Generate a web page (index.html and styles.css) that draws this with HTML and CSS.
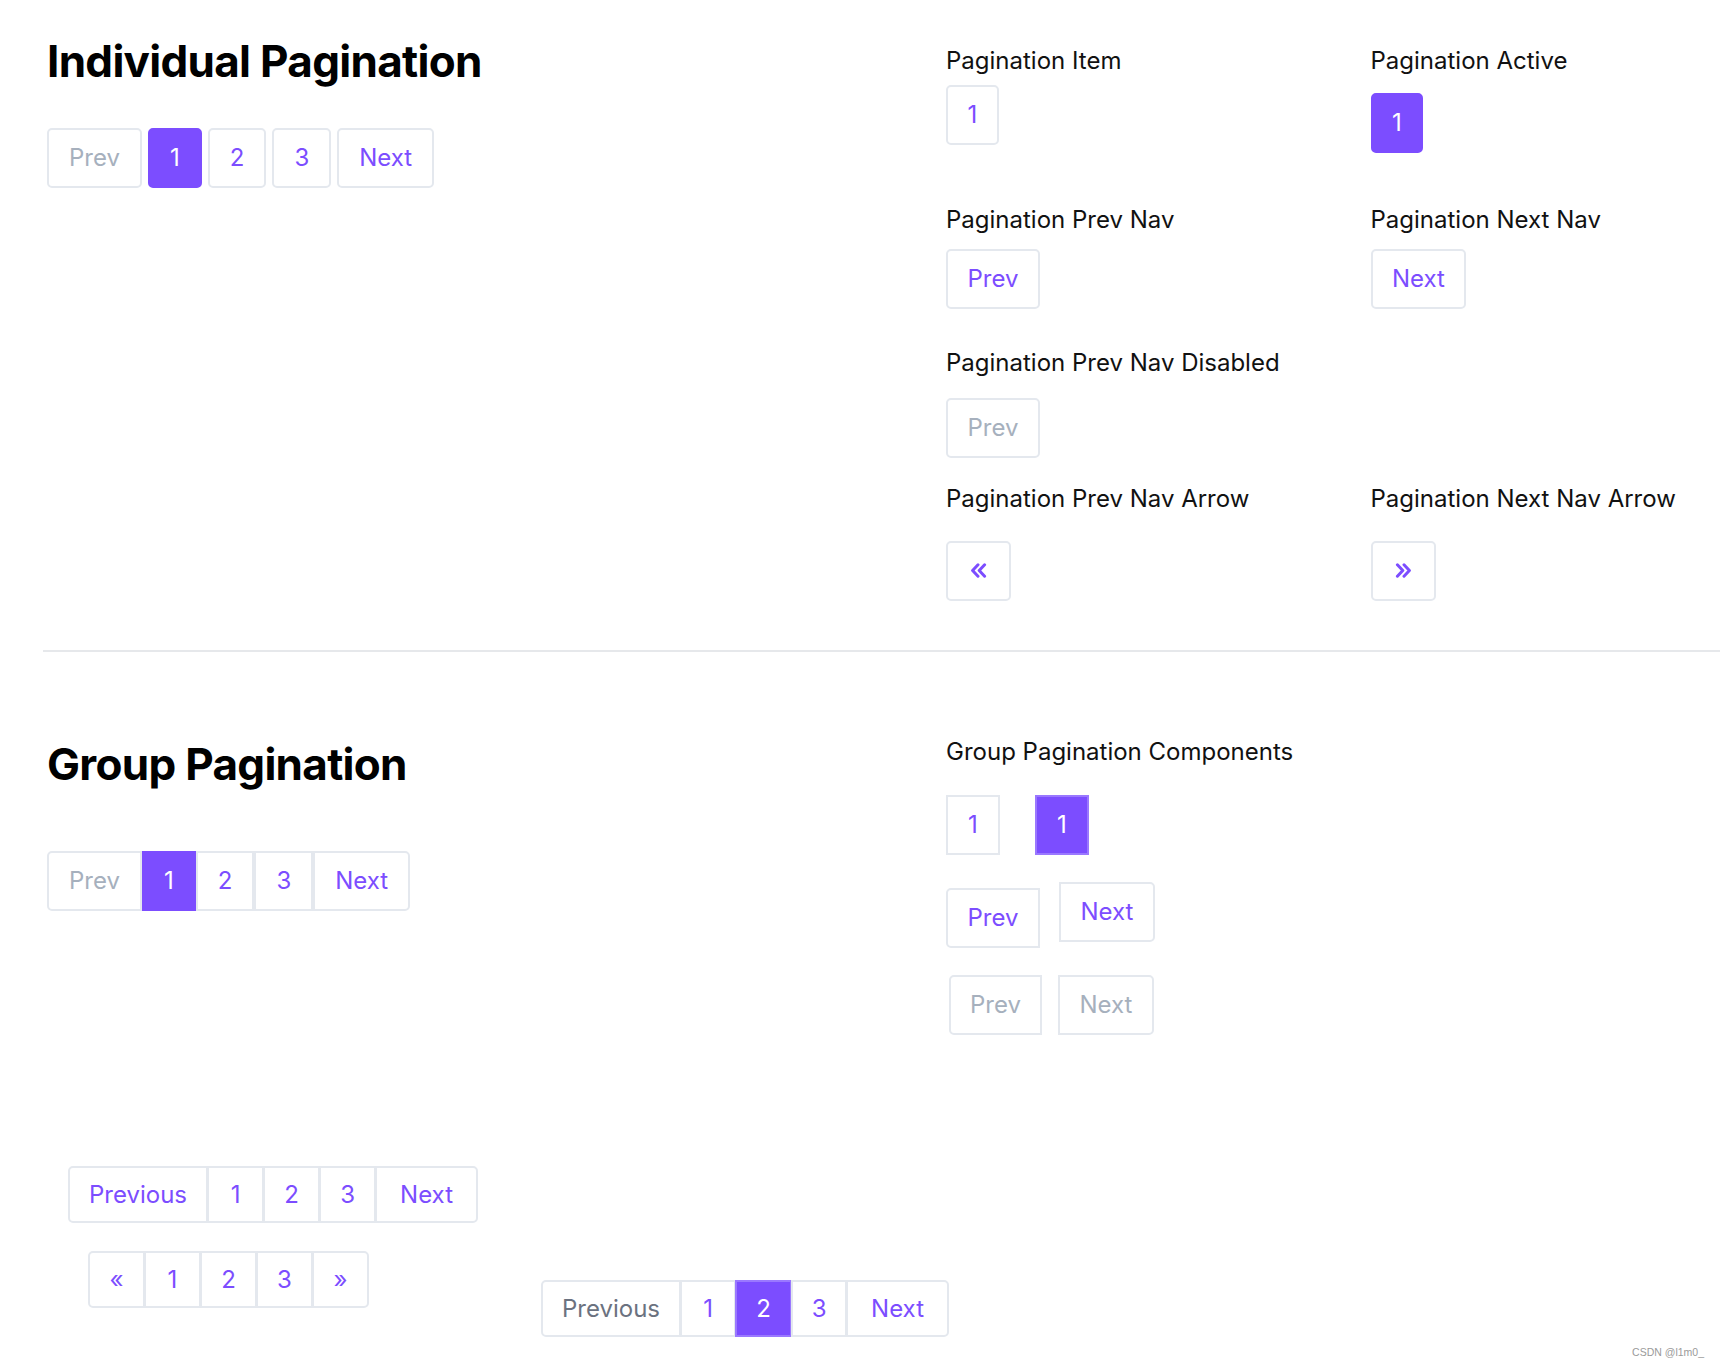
FILE: index.html
```html
<!DOCTYPE html>
<html lang="en">
<head>
<meta charset="utf-8">
<title>Pagination</title>
<link rel="stylesheet" href="styles.css">
</head>
<body>
<main class="page">
  <section class="sec sec-individual">
    <div class="col-left">
      <h2 class="title">Individual Pagination</h2>
      <nav class="pager pager-sep">
        <span class="pg pg-disabled">Prev</span>
        <span class="pg pg-active">1</span>
        <span class="pg">2</span>
        <span class="pg">3</span>
        <span class="pg">Next</span>
      </nav>
    </div>
    <div class="col-right">
      <div class="demo-row demo-row-1">
        <div class="demo">
          <div class="label">Pagination Item</div>
          <span class="pg box-gap-1">1</span>
        </div>
        <div class="demo">
          <div class="label">Pagination Active</div>
          <span class="pg pg-active box-gap-1b">1</span>
        </div>
      </div>
      <div class="demo-row demo-row-2">
        <div class="demo">
          <div class="label">Pagination Prev Nav</div>
          <span class="pg box-gap-2">Prev</span>
        </div>
        <div class="demo">
          <div class="label">Pagination Next Nav</div>
          <span class="pg box-gap-2">Next</span>
        </div>
      </div>
      <div class="demo-row demo-row-3">
        <div class="demo">
          <div class="label">Pagination Prev Nav Disabled</div>
          <span class="pg pg-disabled box-gap-3">Prev</span>
        </div>
      </div>
      <div class="demo-row demo-row-4">
        <div class="demo">
          <div class="label">Pagination Prev Nav Arrow</div>
          <span class="pg pg-arrow box-gap-4">
            <svg class="chev" width="17" height="15" viewBox="0 0 17 15" aria-hidden="true"><path d="M8 1.8 L2.6 7.5 L8 13.2 M14.6 1.8 L9.2 7.5 L14.6 13.2" fill="none" stroke="currentColor" stroke-width="3" stroke-linecap="round" stroke-linejoin="round"/></svg>
          </span>
        </div>
        <div class="demo">
          <div class="label">Pagination Next Nav Arrow</div>
          <span class="pg pg-arrow box-gap-4">
            <svg class="chev" width="17" height="15" viewBox="0 0 17 15" aria-hidden="true"><path d="M2.4 1.8 L7.8 7.5 L2.4 13.2 M9 1.8 L14.4 7.5 L9 13.2" fill="none" stroke="currentColor" stroke-width="3" stroke-linecap="round" stroke-linejoin="round"/></svg>
          </span>
        </div>
      </div>
    </div>
  </section>

  <hr class="divider">

  <section class="sec sec-group">
    <div class="col-left">
      <h2 class="title title-group">Group Pagination</h2>
      <nav class="pager pager-group">
        <span class="pg pg-disabled">Prev</span>
        <span class="pg pg-active">1</span>
        <span class="pg">2</span>
        <span class="pg">3</span>
        <span class="pg">Next</span>
      </nav>
    </div>
    <div class="col-right">
      <div class="label">Group Pagination Components</div>
      <div class="comp-row comp-row-1">
        <span class="pg pg-square">1</span>
        <span class="pg pg-square pg-active pg-active-soft">1</span>
      </div>
      <div class="comp-row comp-row-2">
        <span class="pg pg-left comp-prev">Prev</span>
        <span class="pg pg-right">Next</span>
      </div>
      <div class="comp-row comp-row-3">
        <span class="pg pg-left pg-disabled comp-prev-dis">Prev</span>
        <span class="pg pg-right pg-disabled">Next</span>
      </div>
    </div>
  </section>

  <section class="extra">
    <nav class="pager pager-small row-a">
      <span class="pg pg-sm pg-previous">Previous</span>
      <span class="pg pg-sm pg-num">1</span>
      <span class="pg pg-sm pg-num">2</span>
      <span class="pg pg-sm pg-num">3</span>
      <span class="pg pg-sm pg-next">Next</span>
    </nav>
    <div class="extra-bottom">
      <nav class="pager pager-small row-b">
        <span class="pg pg-sm pg-num">&laquo;</span>
        <span class="pg pg-sm pg-num">1</span>
        <span class="pg pg-sm pg-num">2</span>
        <span class="pg pg-sm pg-num">3</span>
        <span class="pg pg-sm pg-num">&raquo;</span>
      </nav>
      <nav class="pager pager-small row-c">
        <span class="pg pg-sm pg-previous pg-muted">Previous</span>
        <span class="pg pg-sm pg-num pg-num-narrow">1</span>
        <span class="pg pg-sm pg-num pg-active pg-active-soft">2</span>
        <span class="pg pg-sm pg-num pg-num-narrow">3</span>
        <span class="pg pg-sm pg-next">Next</span>
      </nav>
    </div>
  </section>

  <span class="watermark">CSDN @l1m0_</span>
</main>
</body>
</html>
```

FILE: styles.css
```css
* { box-sizing: border-box; }

html, body {
  margin: 0;
  padding: 0;
  background: #ffffff;
}

body {
  font-family: Inter, "Noto Sans", "Liberation Sans", sans-serif;
  color: #111111;
  overflow: hidden;
}

.page {
  position: relative;
  width: 1720px;
  height: 1366px;
}

.sec {
  display: grid;
  grid-template-columns: 899px 1fr;
  padding-left: 47px;
}

.sec-individual {
  padding-top: 35px;
}

.title {
  margin: 0;
  font-size: 44px;
  line-height: 53px;
  font-weight: 700;
  color: #000000;
  letter-spacing: -0.7px;
}

.pager {
  display: flex;
  align-items: flex-start;
}

.pager-sep {
  margin-top: 40px;
  gap: 6px;
}

.pager-sep .pg {
  padding: 0 20px;
}

/* base pagination button */
.pg {
  display: inline-flex;
  align-items: center;
  justify-content: center;
  height: 60px;
  padding: 0 19.5px;
  border: 2px solid #e4e8ee;
  border-radius: 5px;
  background: #ffffff;
  color: #7c4dff;
  font-size: 24px;
  line-height: 36px;
  white-space: nowrap;
}

.pg-active {
  background: #7c4dff;
  border-color: #7c4dff;
  color: #ffffff;
}

.pg-active-soft {
  border-color: #9a78ff;
}

.pg-disabled {
  color: #a6b0bd;
}

.pg-muted {
  color: #6b7280;
}

.pg-arrow {
  padding: 0 22px;
}

.chev {
  display: block;
}

/* right column demos */
.col-right {
  display: flex;
  flex-direction: column;
  align-items: flex-start;
}

.sec-individual .col-right {
  margin-top: 8px;
}

.demo-row {
  display: grid;
  grid-template-columns: 424.5px 1fr;
  width: 100%;
}

.demo {
  display: flex;
  flex-direction: column;
  align-items: flex-start;
}

.label {
  font-size: 24px;
  line-height: 36px;
  color: #111111;
}

.box-gap-1 { margin-top: 6px; }
.box-gap-1b { margin-top: 14px; }

.demo-row-2 { margin-top: 49px; }
.box-gap-2 { margin-top: 11px; }

.demo-row-3 { margin-top: 36px; }
.box-gap-3 { margin-top: 17px; }

.demo-row-4 { margin-top: 23px; }
.box-gap-4 { margin-top: 23.5px; }

.divider {
  display: block;
  margin: 49.5px 0 0 43px;
  height: 2px;
  border: 0;
  background: #e6e8eb;
}

/* group section */
.sec-group {
  padding-top: 81.5px;
}

.title-group {
  margin-top: 4px;
}

.pager-group {
  margin-top: 60.5px;
}

.pager-group .pg {
  padding: 0 20px;
}

.pager-group .pg,
.pager-small .pg {
  border-radius: 0;
}

.pager-small .pg + .pg {
  margin-left: -1px;
}

.pager-group .pg:first-child,
.pager-small .pg:first-child {
  border-radius: 5px 0 0 5px;
}

.pager-group .pg:last-child,
.pager-small .pg:last-child {
  border-radius: 0 5px 5px 0;
}

.comp-row {
  display: flex;
  align-items: flex-start;
}

.comp-row-1 {
  margin-top: 25.5px;
  gap: 35px;
}

.pg-square {
  border-radius: 0;
  width: 54px;
  padding: 0;
}

.comp-row-2 {
  margin-top: 26.5px;
  gap: 19px;
}

.comp-prev {
  margin-top: 6.5px;
}

.comp-row-3 {
  margin-top: 27px;
  gap: 15.5px;
}

.comp-prev-dis {
  margin-left: 2.5px;
}

.pg-left {
  border-radius: 5px 0 0 5px;
}

.pg-right {
  border-radius: 0 5px 5px 0;
}

/* extra rows */
.extra {
  display: flex;
  flex-direction: column;
  align-items: flex-start;
  margin-top: 131px;
}

.pg-sm {
  height: 57px;
  line-height: 33px;
}

.pg-num {
  width: 57px;
  padding: 0;
}

.pg-num-narrow {
  width: 56px;
}

.pg-previous {
  padding: 0 19px;
}

.pg-next {
  padding: 0 23px;
}

.row-a {
  margin-left: 68px;
}

.extra-bottom {
  display: flex;
  align-items: flex-start;
  margin-top: 28px;
}

.row-b {
  margin-left: 88px;
}

.row-c {
  margin-left: 172px;
  margin-top: 29px;
}

.watermark {
  position: absolute;
  right: 16px;
  bottom: 8px;
  font-family: "Liberation Sans", Arial, sans-serif;
  font-size: 10.5px;
  color: #9a9a9a;
}
```
